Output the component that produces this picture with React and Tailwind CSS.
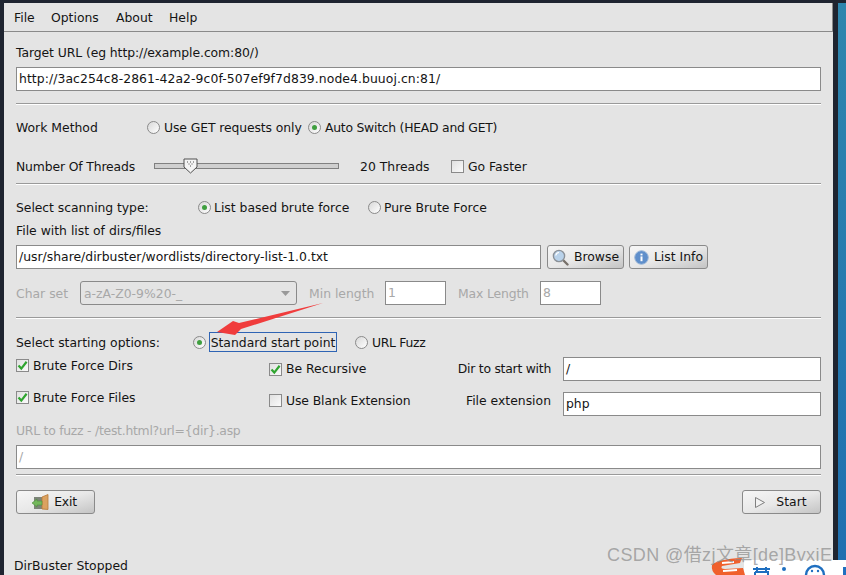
import React from 'react';

const Radio = ({ checked }) => (
  <span className="w-[13px] h-[13px] shrink-0 rounded-full border border-[#8a8a8a] bg-gradient-to-br from-[#d8d8d8] to-white flex items-center justify-center">
    {checked && <span className="w-[5px] h-[5px] rounded-full bg-[#3f9f3f]" />}
  </span>
);

const Check = ({ checked }) => (
  <span className="w-[13px] h-[13px] shrink-0 border border-[#8a8a8a] bg-gradient-to-br from-[#e0e0e0] to-[#fafafa] flex items-center justify-center">
    {checked && (
      <svg width="11" height="11" viewBox="0 0 11 11">
        <path d="M1.5 5.5 L4.3 8.6 L9.6 1.8" fill="none" stroke="#2fa52f" strokeWidth="2.2" />
      </svg>
    )}
  </span>
);

const Field = ({ value, className = '', disabled }) => (
  <div className={`h-6 border border-[#8a8a8a] bg-white pl-[2px] pb-[2px] flex items-center ${disabled ? 'text-[#a8a8a8]' : ''} ${className}`}>
    {value}
  </div>
);

const Rule = ({ className = '' }) => (
  <div className={`h-[2px] border-t border-[#9a9a9a] bg-white ${className}`} />
);

const Button = ({ icon, label, className = '' }) => (
  <div className={`h-6 rounded-[3px] border border-[#8a8a8a] bg-gradient-to-br from-[#f6f6f6] via-[#e8e8e8] to-[#c4c4c4] flex items-center justify-center gap-[5px] ${className}`}>
    {icon}
    <span className="-mt-[2px]">{label}</span>
  </div>
);

const SearchIcon = () => (
  <svg width="17" height="17" viewBox="0 0 17 17">
    <path d="M10.5 10.5 L15.5 15.5" stroke="#77706a" strokeWidth="2.4" strokeLinecap="round" />
    <circle cx="7" cy="7" r="5.6" fill="#b9d2ea" stroke="#8b9198" strokeWidth="1.4" />
    <path d="M3.8 6.5 A3.5 3.5 0 0 1 7 3.5" fill="none" stroke="#ffffff" strokeWidth="1.2" />
  </svg>
);

const InfoIcon = () => (
  <svg width="15" height="15" viewBox="0 0 15 15">
    <circle cx="7.5" cy="7.5" r="6.8" fill="#5f8fcb" stroke="#9db8d8" strokeWidth="1" />
    <rect x="6.5" y="6.4" width="2" height="4.8" fill="#ffffff" />
    <rect x="6.5" y="3.6" width="2" height="1.8" fill="#ffffff" />
  </svg>
);

const ExitIcon = () => (
  <svg width="17" height="16" viewBox="0 0 17 16">
    <rect x="2" y="3" width="9" height="12" fill="#7d8579" />
    <path d="M10 3 L16 0.5 V15.5 L10 15 Z" fill="#dba260" stroke="#b7793a" strokeWidth="0.8" />
    <path d="M0 9 L5 5 V7 H10 V11 H5 V13 Z" fill="#74b85c" stroke="#4f8f3c" strokeWidth="0.6" />
  </svg>
);

const PlayIcon = () => (
  <svg width="12" height="13" viewBox="0 0 12 13">
    <path d="M1.5 1.5 L10.5 6.5 L1.5 11.5 Z" fill="#f2f2f2" stroke="#808080" strokeWidth="1" />
  </svg>
);

const App = () => {
  return (
    <div className="relative w-[846px] h-[575px] overflow-hidden bg-[#1e2430] text-[12.4px] leading-[15px] whitespace-nowrap text-[#141414] [font-family:'DejaVu_Sans',sans-serif]">
      <div className="flex h-full pt-[3px]">
        <div className="w-[4px] shrink-0" />
        {/* DirBuster window */}
        <div className="w-[829px] shrink-0 bg-[#e4e4e4]">
          <div className="h-[29px] border-b border-[#8a8a8a] border-r flex items-center pl-[10px]">
            <span className="w-[37px]">File</span>
            <span className="w-[65px]">Options</span>
            <span className="w-[53px]">About</span>
            <span>Help</span>
          </div>

          <div className="pl-[12px] w-[817px]">
            <div className="h-4 mt-[12px] flex items-center tracking-[-0.08px]">Target URL (eg http://example.com:80/)</div>
            <Field className="mt-[7px] tracking-[0.07px]" value="http://3ac254c8-2861-42a2-9c0f-507ef9f7d839.node4.buuoj.cn:81/" />
            <Rule className="mt-[12px]" />

            <div className="h-4 mt-[14px] flex items-center">
              <span className="w-[131px]">Work Method</span>
              <Radio />
              <span className="ml-[4px] w-[144px] tracking-[-0.1px]">Use GET requests only</span>
              <Radio checked />
              <span className="ml-[4px] tracking-[-0.25px]">Auto Switch (HEAD and GET)</span>
            </div>

            <div className="h-4 mt-[23px] flex items-center">
              <span className="w-[138px] tracking-[-0.15px]">Number Of Threads</span>
              <div className="relative w-[185px] h-[6px] border border-[#808080] bg-[#cfcfcf]">
                {/* slider thumb */}
                <svg className="absolute left-[28px] -top-[6px]" width="15" height="16" viewBox="0 0 15 16">
                  <path d="M1 1 H14 V9 L7.5 15 L1 9 Z" fill="#f4f4f4" stroke="#505050" />
                  <path d="M4 4 h1 M7 4 h1 M10 4 h1 M5.5 6 h1 M8.5 6 h1 M7 8 h1" stroke="#505050" />
                </svg>
              </div>
              <span className="ml-[21px] w-[91px]">20 Threads</span>
              <Check />
              <span className="ml-[4px]">Go Faster</span>
            </div>
            <Rule className="mt-[9px]" />

            <div className="h-4 mt-[14px] flex items-center">
              <span className="w-[182px] tracking-[-0.05px]">Select scanning type:</span>
              <Radio checked />
              <span className="ml-[3px] w-[154px]">List based brute force</span>
              <Radio />
              <span className="ml-[3px]">Pure Brute Force</span>
            </div>

            <div className="h-4 mt-[7px] flex items-center">File with list of dirs/files</div>

            <div className="mt-[7px] flex">
              <Field className="w-[525px]" value="/usr/share/dirbuster/wordlists/directory-list-1.0.txt" />
              <Button className="w-[77px] ml-[6px]" icon={<SearchIcon />} label="Browse" />
              <Button className="w-[79px] ml-[5px]" icon={<InfoIcon />} label="List Info" />
            </div>

            <div className="mt-[12px] flex items-center text-[#a8a8a8]">
              <span className="w-[64px]">Char set</span>
              <div className="w-[217px] h-6 rounded-[3px] border border-[#8a8a8a] flex items-center justify-between pl-[3px] pr-[6px]">
                <span>a-zA-Z0-9%20-_</span>
                <svg width="9" height="5" viewBox="0 0 9 5"><path d="M0 0 H9 L4.5 5 Z" fill="#999999" /></svg>
              </div>
              <span className="w-[76px] ml-[12px]">Min length</span>
              <Field disabled className="w-[61px]" value="1" />
              <span className="w-[82px] ml-[12px] tracking-[-0.15px]">Max Length</span>
              <Field disabled className="w-[61px]" value="8" />
            </div>
            <Rule className="mt-[12px]" />

            <div className="h-5 mt-[13px] flex items-center">
              <span className="w-[177px]">Select starting options:</span>
              <Radio checked />
              <span className="ml-[3px] w-[128px] h-5 border border-[#2f64b4] flex items-center justify-center">Standard start point</span>
              <span className="ml-[18px]"><Radio /></span>
              <span className="ml-[4px] tracking-[-0.3px]">URL Fuzz</span>
            </div>

            <div className="mt-[5px] grid grid-cols-[253px_294px_258px] grid-rows-[24px_24px] gap-y-[11px]">
              <div className="flex items-center gap-[4px] -mt-[8px]"><Check checked />Brute Force Dirs</div>
              <div className="flex items-center pr-[12px]">
                <Check checked />
                <span className="ml-[4px] flex-1 -mt-px">Be Recursive</span>
                <span className="tracking-[-0.25px] -mt-[2px]">Dir to start with</span>
              </div>
              <Field value="/" />
              <div className="flex items-center gap-[4px] -mt-[14px]"><Check checked />Brute Force Files</div>
              <div className="flex items-center pr-[12px] -mt-[8px]">
                <Check />
                <span className="ml-[4px] flex-1 tracking-[-0.1px]">Use Blank Extension</span>
                <span>File extension</span>
              </div>
              <Field value="php" />
            </div>

            <div className="h-4 mt-[6px] flex items-center text-[#a8a8a8] tracking-[-0.25px]">URL to fuzz - /test.html?url={'{dir}'}.asp</div>
            <Field disabled className="mt-[7px]" value="/" />
            <Rule className="mt-[5px]" />

            <div className="mt-[14px] flex justify-between">
              <Button className="w-[79px] tracking-[-0.2px] pr-[2px]" icon={<ExitIcon />} label="Exit" />
              <Button className="w-[79px] gap-[10px] pr-[2px]" icon={<PlayIcon />} label="Start" />
            </div>
            <div className="-ml-[2px] mt-[43px] h-4 flex items-center">DirBuster Stopped</div>
          </div>
        </div>
        <div className="w-[5px] shrink-0" />
        <div className="flex-1 bg-gradient-to-b from-[#2f86ad] to-[#1f6fb0]" />
      </div>

      {/* red annotation arrow */}
      <svg className="absolute left-0 top-0 pointer-events-none" width="846" height="575">
        <path d="M323 303 L239 323 L233 321 L217 332 L235 335 L241 329 Z" fill="#f03c3c" />
      </svg>

      {/* CSDN overlay in the corner */}
      <div className="absolute right-0 bottom-0 w-[102px] h-[15px] bg-white" />
      <svg className="absolute left-[710px] top-[557px]" width="136" height="18" viewBox="0 0 136 18">
        <path d="M2 8 Q8 2 32 1 L30 6 L12 9 Q10 12 15 12 L33 11 L35 18 H6 Q1 14 2 8 Z" fill="#f0602c" />
        <path d="M12 6 L24 5 M13 14 L27 13" stroke="#ffffff" strokeWidth="2" />
        <path d="M43 12 H60 M47 10 V14 M56 10 V14 M45 15 H58 V18 M45 15 V18" stroke="#1f6fc0" strokeWidth="2" fill="none" />
        <circle cx="74" cy="12" r="2" fill="#1f6fc0" />
        <circle cx="105" cy="18" r="9" fill="none" stroke="#1f6fc0" strokeWidth="2.4" />
        <circle cx="102" cy="14" r="1.2" fill="#1f6fc0" />
        <circle cx="108" cy="14" r="1.2" fill="#1f6fc0" />
        <rect x="133" y="10" width="3" height="8" fill="#1f6fc0" />
      </svg>
      <div className="absolute left-[607px] top-[545px] text-[18px] leading-5 tracking-[0.4px] text-[#8a8a8a]/70 [font-family:'Liberation_Sans','Noto_Sans_CJK_SC',sans-serif]">
        CSDN @借zj文章[de]BvxiE
      </div>
    </div>
  );
};

export default App;
